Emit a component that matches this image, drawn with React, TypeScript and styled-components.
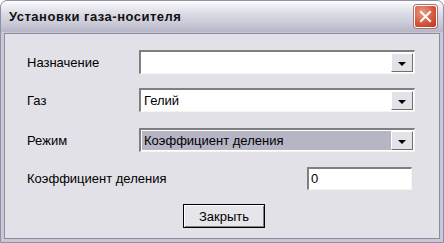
import styled, { createGlobalStyle } from 'styled-components'

const GlobalStyle = createGlobalStyle`
  html, body {
    margin: 0;
    padding: 0;
    background: #ffffff;
  }
  body {
    font-family: 'Liberation Sans', Arial, sans-serif;
  }
`

const Window = styled.div`
  width: 444px;
  height: 243px;
  box-sizing: border-box;
  display: flex;
  flex-direction: column;
  border: 1px solid #8f8fa6;
  border-radius: 7px 7px 0 0;
  background: #c4c4d4;
  overflow: hidden;
`

const TitleBar = styled.div`
  height: 31px;
  flex: none;
  display: flex;
  align-items: center;
  justify-content: space-between;
  padding: 0 6px 0 8px;
  background: linear-gradient(
    to bottom,
    #ffffff 0%,
    #f1f1f6 12%,
    #d9d9e4 45%,
    #cbcbd9 70%,
    #b6b6c8 100%
  );
`

const Title = styled.span`
  font-size: 13px;
  font-weight: bold;
  color: #111111;
  letter-spacing: 0.5px;
`

const CloseButton = styled.div`
  width: 21px;
  height: 21px;
  border: 1px solid #ffffff;
  border-radius: 3px;
  background: radial-gradient(circle at 35% 30%, #e99a84 0%, #d4593f 55%, #b8351f 100%);
  box-shadow: 0 0 0 1px #b07070;
  display: flex;
  align-items: center;
  justify-content: center;
`

const Frame = styled.div`
  flex: 1;
  display: flex;
  padding: 1px 3px 3px 3px;
  background: #c8c8d6;
`

const Client = styled.div`
  flex: 1;
  box-sizing: border-box;
  border: 1px solid #8c8c9e;
  background: #e2e1e8;
  padding: 16px 0 0 22px;
  display: flex;
  flex-direction: column;
  gap: 14px;
`

const Row = styled.div<{ shift?: number }>`
  height: 24px;
  display: flex;
  align-items: center;
  margin-top: ${({ shift }) => shift ?? 0}px;
`

const Label = styled.span<{ width: number }>`
  width: ${({ width }) => width}px;
  flex: none;
  font-size: 13px;
  color: #000000;
`

const Combo = styled.div`
  width: 276px;
  height: 24px;
  box-sizing: border-box;
  display: flex;
  align-items: center;
  border-top: 2px solid #7f7f7f;
  border-left: 2px solid #7f7f7f;
  border-right: 1px solid #f6f5ee;
  border-bottom: 1px solid #f6f5ee;
  background: #ffffff;
  padding: 1px;
`

const ComboText = styled.div<{ focused?: boolean }>`
  flex: 1;
  height: 100%;
  display: flex;
  align-items: center;
  padding-left: 2px;
  font-size: 13px;
  color: #000000;
  background: ${({ focused }) => (focused ? '#b5b5c4' : 'transparent')};
`

const DropButton = styled.div`
  width: 22px;
  height: 100%;
  box-sizing: border-box;
  flex: none;
  display: flex;
  align-items: center;
  justify-content: center;
  background: #e3e2e9;
  border-top: 1px solid #ffffff;
  border-left: 1px solid #ffffff;
  border-right: 1px solid #707070;
  border-bottom: 1px solid #707070;
`

const Arrow = styled.div`
  width: 0;
  height: 0;
  border-left: 4px solid transparent;
  border-right: 4px solid transparent;
  border-top: 4px solid #000000;
  margin-top: 2px;
`

const TextInput = styled.div`
  width: 105px;
  height: 23px;
  box-sizing: border-box;
  border-top: 2px solid #7f7f7f;
  border-left: 2px solid #7f7f7f;
  border-right: 1px solid #f6f5ee;
  border-bottom: 1px solid #f6f5ee;
  background: #ffffff;
  font-size: 13px;
  display: flex;
  align-items: center;
  padding-left: 2px;
`

const ButtonRow = styled.div`
  display: flex;
  padding-left: 156px;
`

const Button = styled.div`
  width: 82px;
  height: 24px;
  box-sizing: border-box;
  border: 1px solid #000000;
  box-shadow: inset 1px 1px 0 #ffffff, inset -1px -1px 0 #808080;
  background: #e6e5ea;
  display: flex;
  align-items: center;
  justify-content: center;
  font-size: 13px;
  color: #000000;
`

export default function App() {
  return (
    <>
      <GlobalStyle />
      <Window>
        <TitleBar>
          <Title>Установки газа-носителя</Title>
          <CloseButton>
            <svg width="13" height="13" viewBox="0 0 13 13">
              <path d="M2 2 L11 11 M11 2 L2 11" stroke="#ffffff" strokeWidth="2" strokeLinecap="square" />
            </svg>
          </CloseButton>
        </TitleBar>
        <Frame>
          <Client>
            <Row>
              <Label width={112}>Назначение</Label>
              <Combo>
                <ComboText />
                <DropButton>
                  <Arrow />
                </DropButton>
              </Combo>
            </Row>
            <Row>
              <Label width={112}>Газ</Label>
              <Combo>
                <ComboText>Гелий</ComboText>
                <DropButton>
                  <Arrow />
                </DropButton>
              </Combo>
            </Row>
            <Row shift={2}>
              <Label width={112}>Режим</Label>
              <Combo>
                <ComboText focused>Коэффициент деления</ComboText>
                <DropButton>
                  <Arrow />
                </DropButton>
              </Combo>
            </Row>
            <Row>
              <Label width={280}>Коэффициент деления</Label>
              <TextInput>0</TextInput>
            </Row>
            <ButtonRow>
              <Button>Закрыть</Button>
            </ButtonRow>
          </Client>
        </Frame>
      </Window>
    </>
  )
}
